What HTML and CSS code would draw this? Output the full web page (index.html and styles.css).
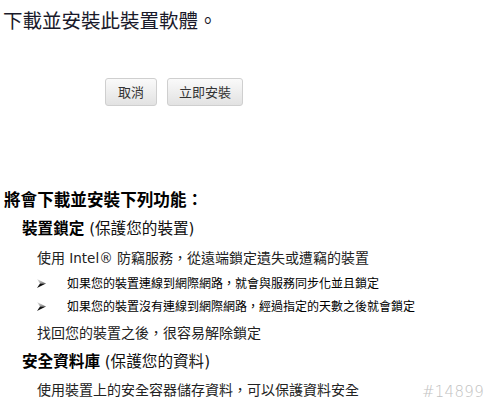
FILE: index.html
```html
<!DOCTYPE html>
<html lang="zh-Hant">
<head>
<meta charset="utf-8">
<link rel="stylesheet" href="styles.css">
</head>
<body>
<div class="page">
  <h1 class="title">下載並安裝此裝置軟體。</h1>
  <div class="actions">
    <button class="btn btn-cancel">取消</button>
    <button class="btn btn-install">立即安裝</button>
  </div>
  <h2 class="heading">將會下載並安裝下列功能：</h2>
  <div class="feature feature-lock">
    <h3 class="feature-title"><b>裝置鎖定</b><span class="latin"> (</span>保護您的裝置<span class="latin">)</span></h3>
    <p class="desc desc-first">使用<span class="latin"> Intel® </span>防竊服務，從遠端鎖定遺失或遭竊的裝置</p>
    <ul class="bullets">
      <li class="bullet bullet-1"><svg class="arrow" width="9" height="9" viewBox="0 0 9 9"><defs><linearGradient id="g1" x1="0" y1="0" x2="1" y2="1"><stop offset="0" stop-color="#e8e8e8"/><stop offset="1" stop-color="#777"/></linearGradient></defs><polygon points="0,0 9,4.5 3,4.5" fill="url(#g1)"/><polygon points="3,4.5 9,4.5 0,9" fill="#111"/></svg><span>如果您的裝置連線到網際網路，就會與服務同步化並且鎖定</span></li>
      <li class="bullet bullet-2"><svg class="arrow" width="9" height="9" viewBox="0 0 9 9"><polygon points="0,0 9,4.5 3,4.5" fill="url(#g1)"/><polygon points="3,4.5 9,4.5 0,9" fill="#111"/></svg><span>如果您的裝置沒有連線到網際網路，經過指定的天數之後就會鎖定</span></li>
    </ul>
    <p class="desc desc-last">找回您的裝置之後，很容易解除鎖定</p>
  </div>
  <div class="feature feature-vault">
    <h3 class="feature-title"><b>安全資料庫</b><span class="latin"> (</span>保護您的資料<span class="latin">)</span></h3>
    <p class="desc desc-first">使用裝置上的安全容器儲存資料，可以保護資料安全</p>
  </div>
</div>
<div class="ticket">#14899</div>
</body>
</html>
```

FILE: styles.css
```css
html, body {
  margin: 0;
  padding: 0;
  background: #fff;
}
body {
  font-family: "Noto Sans CJK TC", "Noto Sans", sans-serif;
  color: #111;
  width: 494px;
  height: 413px;
  overflow: hidden;
  position: relative;
}
.page {
  padding: 7px 0 0 3px;
}
.title {
  margin: 0;
  font-size: 19.5px;
  font-weight: normal;
  line-height: 26px;
  color: #1a1a2a;
}
.actions {
  display: flex;
  gap: 10px;
  margin: 45px 0 0 102px;
}
.btn {
  height: 28px;
  box-sizing: border-box;
  border: 1px solid #cfcfcf;
  border-radius: 3px;
  background: linear-gradient(#fafafa, #e2e2e2);
  font-family: "Noto Sans CJK TC", sans-serif;
  font-size: 13px;
  color: #333;
  padding: 0;
  line-height: 26px;
}
.btn-cancel { width: 52px; }
.btn-install { width: 76px; }
.heading {
  margin: 82px 0 0 1px;
  font-size: 16.6px;
  font-weight: bold;
  line-height: 22px;
  color: #000;
}
.latin {
  font-family: "DejaVu Sans", sans-serif;
}
.feature-title {
  margin: 6px 0 0 19px;
  font-size: 15.6px;
  font-weight: normal;
  line-height: 22px;
  color: #111;
}
.feature-title .latin {
  font-size: 15px;
}
.feature-title b {
  font-weight: bold;
  color: #000;
}
.feature-vault .feature-title {
  margin-top: 7px;
}
.desc {
  margin: 7px 0 0 34px;
  font-size: 14px;
  line-height: 20px;
  color: #222;
}
.desc .latin {
  font-size: 13.5px;
}
.feature-vault .desc-first {
  margin-top: 6px;
}
.desc-last {
  margin-top: 6px;
}
.bullets {
  list-style: none;
  margin: 5px 0 0 34px;
  padding: 0;
}
.bullet {
  display: flex;
  align-items: center;
  font-size: 12px;
  line-height: 20px;
  color: #000;
}
.bullet-2 {
  margin-top: 3px;
}
.arrow {
  width: 9px;
  height: 9px;
  margin-right: 21px;
  flex: none;
}
.ticket {
  position: absolute;
  right: 10px;
  top: 381px;
  font-family: "DejaVu Sans", sans-serif;
  font-size: 15px;
  font-weight: 300;
  line-height: 22px;
  color: #c2c2c2;
  letter-spacing: 0.3px;
}
```
